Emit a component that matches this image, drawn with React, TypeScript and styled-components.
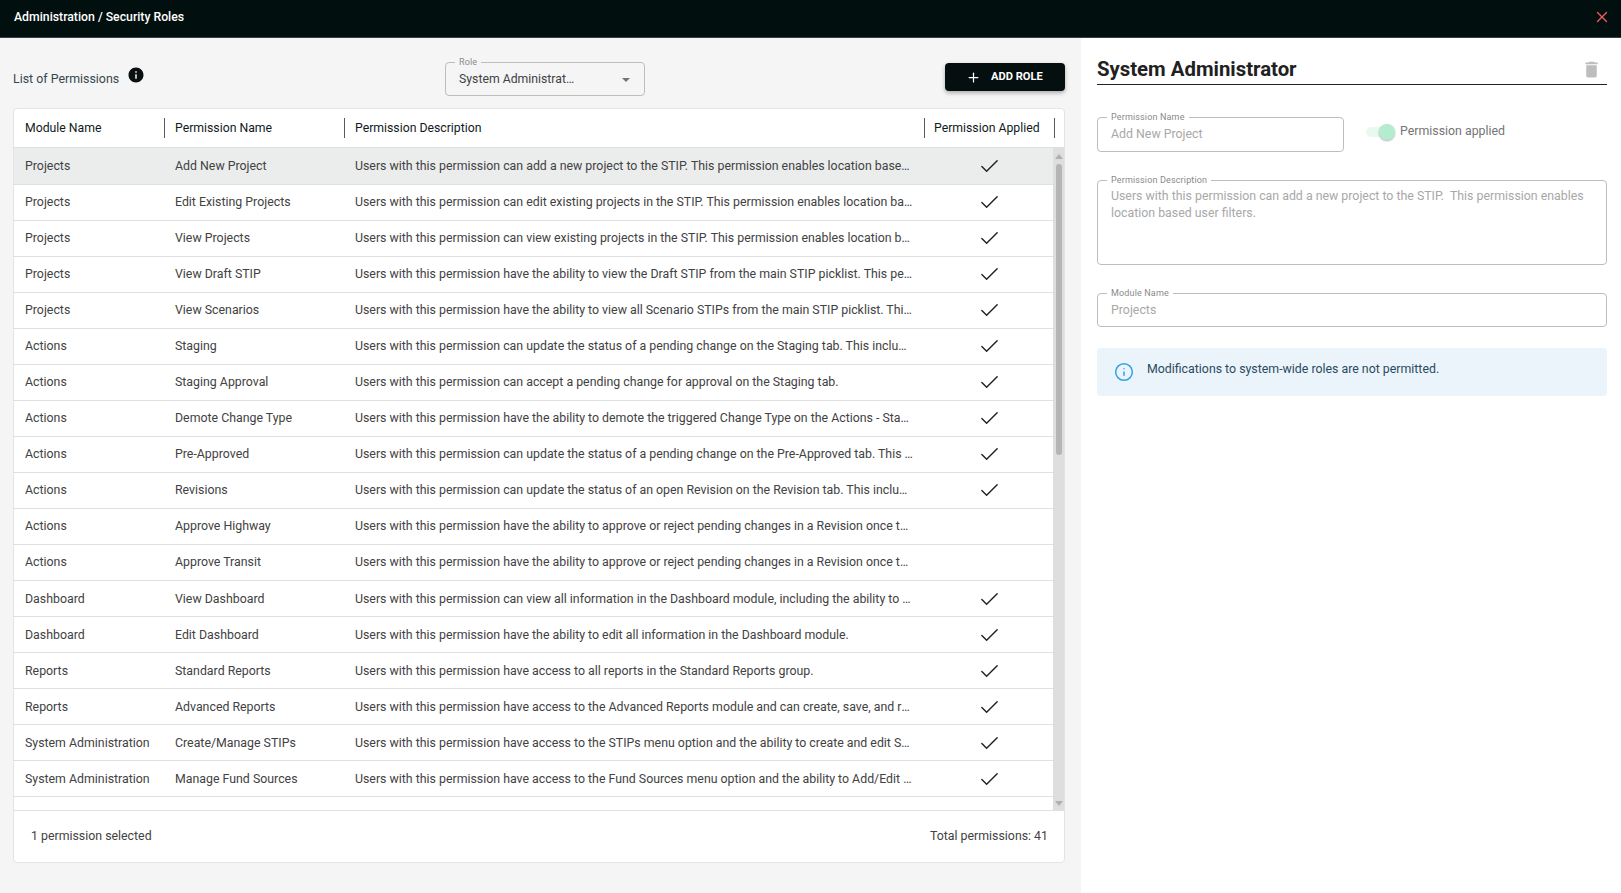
import React from "react";
import styled, { createGlobalStyle } from "styled-components";
import { Check, Plus, X, Info } from "lucide-react";

const Global = createGlobalStyle`
  html, body { margin: 0; padding: 0; height: 100%; background: #fff; }
  body { font-family: Roboto, "Liberation Sans", sans-serif; overflow: hidden; }
  * { box-sizing: border-box; }
`;

const Page = styled.div`
  width: 1621px;
  height: 893px;
  display: flex;
  flex-direction: column;
  overflow: hidden;
`;
const TopBar = styled.header`
  height: 38px;
  flex: none;
  background: #020f0f;
  border-bottom: 1px solid #3a3f3f;
  color: #fff;
  display: flex;
  align-items: center;
  justify-content: space-between;
  padding: 0 10px 3px 14px;
  font-size: 12.25px;
  font-weight: 500;
`;
const CloseButton = styled.span`
  display: flex;
  color: #ee5a5f;
`;
const Main = styled.div`
  flex: 1;
  display: flex;
  min-height: 0;
`;
const LeftPane = styled.section`
  width: 1081px;
  flex: none;
  background: #f5f5f5;
  padding: 24px 16px 30px 13px;
  display: flex;
  flex-direction: column;
`;
const Toolbar = styled.div`
  height: 46px;
  flex: none;
  display: flex;
`;
const ListTitle = styled.div`
  width: 432px;
  flex: none;
  display: flex;
  align-items: flex-start;
  padding-top: 9px;
  font-size: 12.4px;
  color: #37474f;
  gap: 8px;
`;
const InfoDot = styled.span`
  display: inline-flex;
  margin-top: -5px;
  color: #0a0f10;
`;
const RoleSelect = styled.div`
  width: 200px;
  height: 34px;
  flex: none;
  border: 1px solid #bdbdbd;
  border-radius: 4px;
  position: relative;
  display: flex;
  align-items: center;
  padding: 0 13px 1px;
  font-size: 12.25px;
  color: #424242;
`;
const Caret = styled.span`
  margin: 2px 1px 0 auto;
  width: 0;
  height: 0;
  border-left: 4.5px solid transparent;
  border-right: 4.5px solid transparent;
  border-top: 4.5px solid #757575;
`;
const FloatLabel = styled.label<{ $bg?: string }>`
  position: absolute;
  top: -6px;
  left: 9px;
  padding: 0 4px;
  font-size: 9px;
  line-height: 11px;
  letter-spacing: 0.15px;
  color: #8a8a8a;
  background: ${(p) => p.$bg || "#fff"};
`;
const AddButton = styled.button`
  margin-left: auto;
  margin-top: 1px;
  width: 120px;
  height: 28px;
  border: 0;
  border-radius: 4px;
  background: #060f0f;
  color: #fff;
  font: 700 11.15px Roboto, sans-serif;
  display: flex;
  align-items: center;
  padding: 0 0 0 21px;
  gap: 10px;
  box-shadow: 0 2px 4px rgba(0, 0, 0, 0.3);
`;
const AddLabel = styled.span`
  padding-bottom: 2px;
`;
const Card = styled.div`
  flex: 1;
  min-height: 0;
  background: #fff;
  border: 1px solid #e4e4e4;
  border-radius: 4px;
  display: flex;
  flex-direction: column;
  overflow: hidden;
`;
const HeadRow = styled.div`
  display: grid;
  grid-template-columns: 151px 180px 580px 130px;
  height: 39px;
  flex: none;
  align-items: center;
  border-bottom: 1px solid #e0e0e0;
  font-size: 12.25px;
  color: #111a1c;
`;
const HeadCell = styled.div<{ $pad: string }>`
  height: 20px;
  line-height: 20px;
  padding-left: ${(p) => p.$pad};
  border-right: 1.5px solid #5a5a5a;
`;
const Body = styled.div`
  flex: 1;
  min-height: 0;
  display: flex;
  border-bottom: 1px solid #e0e0e0;
`;
const Rows = styled.div`
  flex: 1;
  min-width: 0;
  overflow: hidden;
`;
const Rail = styled.div`
  width: 11px;
  flex: none;
  background: #dedede;
  display: flex;
  flex-direction: column;
  align-items: center;
`;
const RailArrow = styled.span<{ $down?: boolean }>`
  width: 0;
  height: 0;
  flex: none;
  border-left: 4px solid transparent;
  border-right: 4px solid transparent;
  margin-top: ${(p) => (p.$down ? "auto" : "6px")};
  margin-bottom: ${(p) => (p.$down ? "4px" : "0")};
  border-top: ${(p) => (p.$down ? "5px solid #b0b0b0" : "0")};
  border-bottom: ${(p) => (p.$down ? "0" : "5px solid #b0b0b0")};
`;
const RailThumb = styled.span`
  width: 6px;
  height: 291px;
  flex: none;
  margin-top: 5px;
  border-radius: 3px;
  background: #b5b5b5;
`;
const Row = styled.div<{ $selected?: boolean }>`
  display: grid;
  grid-template-columns: 151px 180px 580px 129px;
  height: ${(p) => (p.$selected ? "36.5px" : "36.05px")};
  align-items: center;
  border-bottom: 1px solid #e0e0e0;
  background: ${(p) => (p.$selected ? "#ebeded" : "#fff")};
  font-size: 12.35px;
  color: #424242;
`;
const Cell = styled.div<{ $first?: boolean }>`
  padding-left: ${(p) => (p.$first ? "11px" : "10px")};
  white-space: nowrap;
  overflow: hidden;
  text-overflow: ellipsis;
`;
const DescCell = styled(Cell)`
  padding-right: 11.6px;
`;
const CheckCell = styled.div`
  display: flex;
  justify-content: center;
  padding-top: 1px;
  color: #222;
`;
const CardFooter = styled.div`
  height: 51px;
  flex: none;
  display: flex;
  align-items: center;
  justify-content: space-between;
  padding: 0 16px 2px 17px;
  font-size: 12.35px;
  color: #424242;
`;
const RightPane = styled.aside`
  flex: 1;
  background: #fff;
  padding: 16px 14px 0 16px;
  display: flex;
  flex-direction: column;
`;
const TitleRow = styled.div`
  display: flex;
  align-items: center;
  justify-content: space-between;
  height: 31px;
  border-bottom: 1px solid #222;
  padding-right: 5px;
`;
const Title = styled.h2`
  margin: 0 0 1px;
  font-size: 20.35px;
  font-weight: 700;
  color: #212121;
`;
const FieldRow = styled.div`
  display: flex;
  margin-top: 32px;
  align-items: flex-start;
`;
const Field = styled.div<{ $w?: string; $h: string; $mt?: string }>`
  position: relative;
  width: ${(p) => p.$w || "100%"};
  height: ${(p) => p.$h};
  margin-top: ${(p) => p.$mt || "0"};
  border: 1px solid #bdbdbd;
  border-radius: 4px;
  padding: 8px 13px;
  font-size: 12.35px;
  line-height: 17px;
  color: #a8a8a8;
`;
const DescField = styled(Field)`
  padding-top: 7px;
`;
const ToggleWrap = styled.div`
  display: flex;
  align-items: center;
  margin: 7px 0 0 22px;
  font-size: 12.35px;
  color: #757575;
  gap: 6px;
`;
const ToggleTrack = styled.span`
  position: relative;
  width: 28px;
  height: 10px;
  border-radius: 5px;
  background: #e8f9f0;
  margin-top: 2px;
`;
const ToggleThumb = styled.span`
  position: absolute;
  right: -1px;
  top: -3px;
  width: 16px;
  height: 16px;
  border-radius: 50%;
  background: #b4ecd0;
  box-shadow: 0 1px 2px rgba(0, 0, 0, 0.3);
`;
const Alert = styled.div`
  margin-top: 21px;
  height: 48px;
  border-radius: 4px;
  background: #ebf4fb;
  display: flex;
  padding: 14px 0 0 17px;
  gap: 13px;
  font-size: 12.35px;
  color: #2a4a5e;
`;
const AlertIcon = styled.span`
  display: flex;
  color: #2ea3e8;
`;

const Trash = () => (
  <svg width="21" height="21" viewBox="0 0 24 24" fill="#bdbdbd">
    <path d="M6 19c0 1.1.9 2 2 2h8c1.1 0 2-.9 2-2V7H6v12zM19 4h-3.5l-1-1h-5l-1 1H5v2h14V4z" />
  </svg>
);
const InfoFilled = () => (
  <svg width="18" height="18" viewBox="0 0 24 24" fill="currentColor">
    <path d="M12 2C6.48 2 2 6.48 2 12s4.48 10 10 10 10-4.48 10-10S17.52 2 12 2zm1 15h-2v-6h2v6zm0-8h-2V7h2v2z" />
  </svg>
);

type R = [string, string, string, boolean];
const rows: R[] = [
  ["Projects", "Add New Project", "Users with this permission can add a new project to the STIP. This permission enables location based user filters.", true],
  ["Projects", "Edit Existing Projects", "Users with this permission can edit existing projects in the STIP. This permission enables location based user filters.", true],
  ["Projects", "View Projects", "Users with this permission can view existing projects in the STIP. This permission enables location based user filters.", true],
  ["Projects", "View Draft STIP", "Users with this permission have the ability to view the Draft STIP from the main STIP picklist. This permission enables filters.", true],
  ["Projects", "View Scenarios", "Users with this permission have the ability to view all Scenario STIPs from the main STIP picklist. This permission enables filters.", true],
  ["Actions", "Staging", "Users with this permission can update the status of a pending change on the Staging tab. This includes approval.", true],
  ["Actions", "Staging Approval", "Users with this permission can accept a pending change for approval on the Staging tab.", true],
  ["Actions", "Demote Change Type", "Users with this permission have the ability to demote the triggered Change Type on the Actions - Staging tab.", true],
  ["Actions", "Pre-Approved", "Users with this permission can update the status of a pending change on the Pre-Approved tab. This includes approval.", true],
  ["Actions", "Revisions", "Users with this permission can update the status of an open Revision on the Revision tab. This includes approval.", true],
  ["Actions", "Approve Highway", "Users with this permission have the ability to approve or reject pending changes in a Revision once they are submitted.", false],
  ["Actions", "Approve Transit", "Users with this permission have the ability to approve or reject pending changes in a Revision once they are submitted.", false],
  ["Dashboard", "View Dashboard", "Users with this permission can view all information in the Dashboard module, including the ability to export data.", true],
  ["Dashboard", "Edit Dashboard", "Users with this permission have the ability to edit all information in the Dashboard module.", true],
  ["Reports", "Standard Reports", "Users with this permission have access to all reports in the Standard Reports group.", true],
  ["Reports", "Advanced Reports", "Users with this permission have access to the Advanced Reports module and can create, save, and run reports.", true],
  ["System Administration", "Create/Manage STIPs", "Users with this permission have access to the STIPs menu option and the ability to create and edit STIPs in the system.", true],
  ["System Administration", "Manage Fund Sources", "Users with this permission have access to the Fund Sources menu option and the ability to Add/Edit Fund Sources.", true],
];

export default function App() {
  return (
    <Page>
      <Global />
      <TopBar>
        <span>Administration / Security Roles</span>
        <CloseButton><X size={18} strokeWidth={1.8} /></CloseButton>
      </TopBar>
      <Main>
        <LeftPane>
          <Toolbar>
            <ListTitle>
              List of Permissions
              <InfoDot><InfoFilled /></InfoDot>
            </ListTitle>
            <RoleSelect>
              <FloatLabel $bg="#f5f5f5">Role</FloatLabel>
              <span>System Administrat…</span>
              <Caret />
            </RoleSelect>
            <AddButton><Plus size={15} strokeWidth={2} /><AddLabel>ADD ROLE</AddLabel></AddButton>
          </Toolbar>
          <Card>
            <HeadRow>
              <HeadCell $pad="11px">Module Name</HeadCell>
              <HeadCell $pad="10px">Permission Name</HeadCell>
              <HeadCell $pad="10px">Permission Description</HeadCell>
              <HeadCell $pad="9px">Permission Applied</HeadCell>
            </HeadRow>
            <Body>
              <Rows>
                {rows.map((r, i) => (
                  <Row key={i} $selected={i === 0}>
                    <Cell $first>{r[0]}</Cell>
                    <Cell>{r[1]}</Cell>
                    <DescCell>{r[2]}</DescCell>
                    <CheckCell>{r[3] && <Check size={23} strokeWidth={1.5} />}</CheckCell>
                  </Row>
                ))}
              </Rows>
              <Rail>
                <RailArrow />
                <RailThumb />
                <RailArrow $down />
              </Rail>
            </Body>
            <CardFooter>
              <span>1 permission selected</span>
              <span>Total permissions: 41</span>
            </CardFooter>
          </Card>
        </LeftPane>
        <RightPane>
          <TitleRow>
            <Title>System Administrator</Title>
            <Trash />
          </TitleRow>
          <FieldRow>
            <Field $w="247px" $h="35px">
              <FloatLabel>Permission Name</FloatLabel>
              Add New Project
            </Field>
            <ToggleWrap>
              <ToggleTrack><ToggleThumb /></ToggleTrack>
              Permission applied
            </ToggleWrap>
          </FieldRow>
          <DescField $h="85px" $mt="28px">
            <FloatLabel>Permission Description</FloatLabel>
            Users with this permission can add a new project to the STIP.&nbsp; This permission enables location based user filters.
          </DescField>
          <Field $h="34px" $mt="28px">
            <FloatLabel>Module Name</FloatLabel>
            Projects
          </Field>
          <Alert>
            <AlertIcon><Info size={20} strokeWidth={1.8} /></AlertIcon>
            Modifications to system-wide roles are not permitted.
          </Alert>
        </RightPane>
      </Main>
    </Page>
  );
}
